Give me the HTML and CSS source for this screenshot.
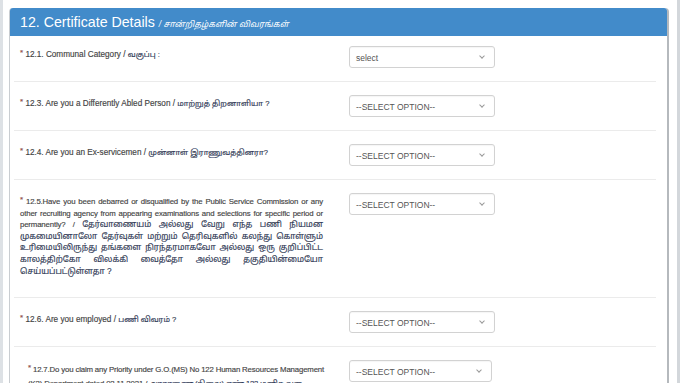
FILE: index.html
```html
<!DOCTYPE html>
<html lang="ta">
<head>
    <meta charset="UTF-8">
    <meta name="viewport" content="width=device-width, initial-scale=1.0">
    <title>Certificate Details</title>
    <link rel="stylesheet" href="styles.css">
</head>
<body>
    <div id="page">
        <div class="panel">
            <div class="panel-heading">
                12. Certificate Details <span class="ta">/ சான்றிதழ்களின் விவரங்கள்</span>
            </div>

            <div class="panel-body">
                <div class="row first">
                    <label class="lbl"><span class="req">*</span> 12.1. Communal Category / <span class="ta">வகுப்பு :</span></label>
                    <div class="select">select<span class="caret"></span></div>
                </div>

                <div class="row">
                    <label class="lbl"><span class="req">*</span> 12.3. Are you a Differently Abled Person / <span class="ta">மாற்றுத் திறனாளியா ?</span></label>
                    <div class="select">--SELECT OPTION--<span class="caret"></span></div>
                </div>

                <div class="row">
                    <label class="lbl"><span class="req">*</span> 12.4. Are you an Ex-servicemen / <span class="ta">முன்னாள் இராணுவத்தினரா?</span></label>
                    <div class="select">--SELECT OPTION--<span class="caret"></span></div>
                </div>

                <div class="row">
                    <label class="lbl just"><span class="req">*</span> 12.5.Have you been debarred or disqualified by the Public Service Commission or any other recruiting agency from appearing examinations and selections for specific period or permanently? / <span class="ta">தேர்வாணையம் அல்லது வேறு எந்த பணி நியமன முகமையினாலோ தேர்வுகள் மற்றும் தெரிவுகளில் கலந்து கொள்ளும் உரிமையிலிருந்து தங்களை நிரந்தரமாகவோ அல்லது ஒரு குறிப்பிட்ட காலத்திற்கோ விலக்கி வைத்தோ அல்லது தகுதியின்மையோ செய்யப்பட்டுள்ளதா ?</span></label>
                    <div class="select">--SELECT OPTION--<span class="caret"></span></div>
                </div>

                <div class="row">
                    <label class="lbl"><span class="req">*</span> 12.6. Are you employed / <span class="ta">பணி விவரம் ?</span></label>
                    <div class="select">--SELECT OPTION--<span class="caret"></span></div>
                </div>

                <div class="row nested">
                    <label class="lbl multi"><span class="req">*</span> 12.7.Do you claim any Priority under G.O.(MS) No 122 Human Resources Management (K2) Department dated 02.11.2021 / <span class="ta">அரசாணை (நிலை) எண் 122 மனித வள மேலாண்மை (கி2) துறை நாள் 02.11.2021 ன் படி முன்னுரிமை கோருகிறீர்களா ?</span></label>
                    <div class="select">--SELECT OPTION--<span class="caret"></span></div>
                </div>
            </div>
        </div>
    </div>
</body>
</html>
```

FILE: styles.css
```css
html, body {
    margin: 0;
    padding: 0;
    background: #fff;
    overflow: hidden;
}

body {
    font-family: "Liberation Sans", Arial, "Noto Sans Tamil", "Lohit Tamil", sans-serif;
    color: #333;
}

#page {
    height: 383px;
    padding-top: 8px;
    border-left: 3px solid #dde1e5;
    border-right: 3px solid #d3d7db;
    box-sizing: border-box;
}

.panel {
    margin-left: 6px;
    width: 660px;
    border: 1px solid #c9cdd1;
    border-top: none;
    border-right: 2px solid #b5b9bd;
    border-radius: 4px 4px 0 0;
    background: #fff;
    box-sizing: border-box;
    height: 400px;
}

.panel-heading {
    background: #428bca;
    color: #fff;
    font-size: 14.2px;
    height: 28px;
    line-height: 28px;
    padding-left: 10px;
    border-radius: 3px 3px 0 0;
    white-space: nowrap;
}

.panel-heading .ta {
    font-size: 8.4px;
    font-style: italic;
    color: #fff;
}

.panel-body {
    padding: 0 11px 0 4px;
}

.row {
    display: grid;
    grid-template-columns: 303px 146px;
    column-gap: 26px;
    align-items: start;
    padding: 13px 0 13px 6px;
    border-bottom: 1px solid #ebebeb;
}

.row.first {
    padding-top: 10px;
}

.lbl {
    font-size: 8.2px;
    line-height: 14px;
    height: 18px;
    color: #444;
    -webkit-text-stroke: 0.15px #444;
    white-space: nowrap;
}

.lbl .ta {
    font-size: 7.6px;
    color: #27355e;
}

.lbl.just {
    height: auto;
    white-space: normal;
    font-size: 7.8px;
    line-height: 11.6px;
    letter-spacing: -0.15px;
    text-align: justify;
    margin-top: 1px;
    margin-bottom: 7px;
}

.lbl.just .ta {
    letter-spacing: 0;
    font-size: 8.2px;
}

.row.nested {
    grid-template-columns: 297px 143px;
    column-gap: 24px;
    padding-left: 14px;
    border-bottom: none;
}

.lbl.multi {
    height: auto;
    white-space: normal;
    font-size: 7.8px;
    letter-spacing: -0.15px;
    margin-top: 1px;
}

.req {
    color: #d9534f;
    font-size: 8px;
    vertical-align: 2px;
}

.select {
    position: relative;
    height: 22px;
    line-height: 22px;
    box-sizing: border-box;
    border: 1px solid #d2d2d2;
    border-radius: 3px;
    padding-left: 6px;
    font-size: 8.5px;
    color: #555;
    background: #fff;
    box-shadow: inset 0 1px 1px rgba(0, 0, 0, 0.04);
}

.caret {
    position: absolute;
    right: 10px;
    top: 7px;
    width: 3px;
    height: 3px;
    border-right: 1px solid #999;
    border-bottom: 1px solid #999;
    transform: rotate(45deg);
}
```
